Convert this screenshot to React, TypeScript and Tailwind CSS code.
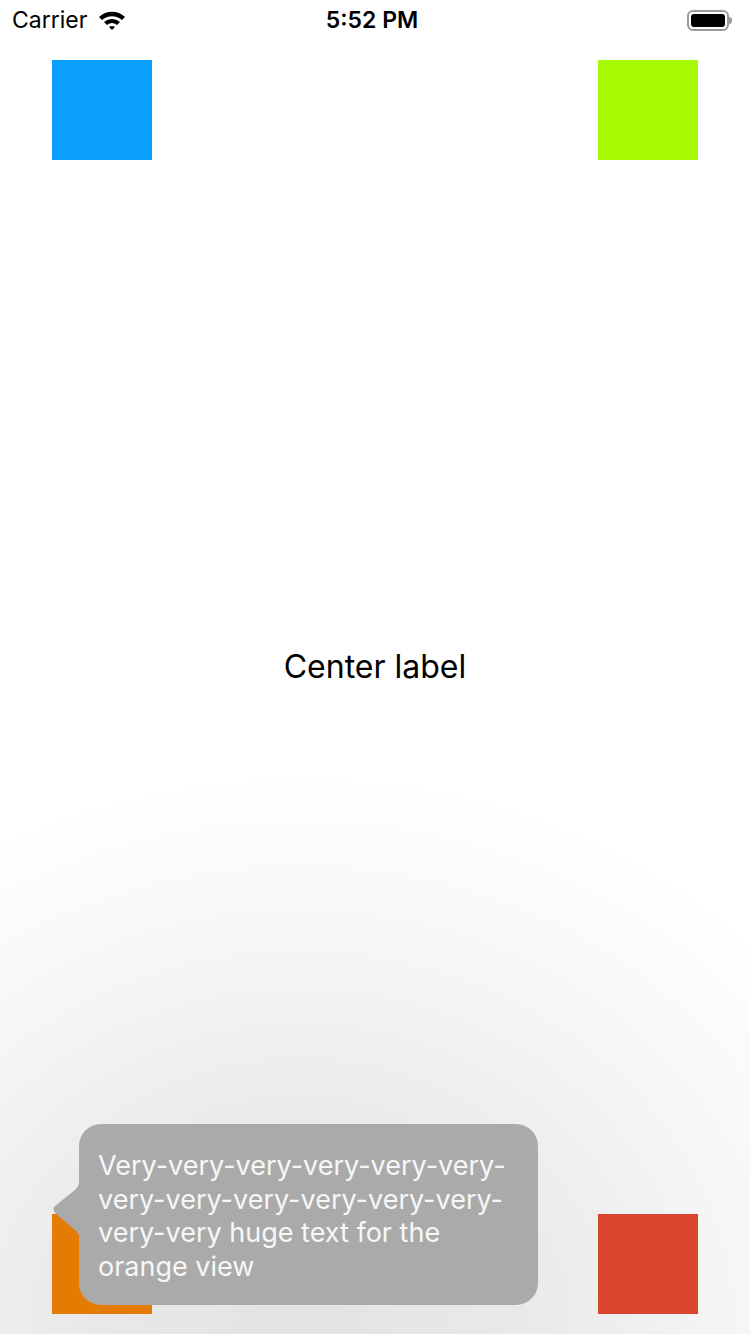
const StatusBar = () => (
  <div className="h-10 flex items-center px-3 text-[23px] text-black">
    <div className="flex items-center gap-[10px] flex-1">
      <span>Carrier</span>
      <svg width="30" height="22" viewBox="0 0 30 22">
        <path d="M2 8 A19 19 0 0 1 28 8 L25 11 A15 15 0 0 0 5 11 Z" fill="#000" />
        <path d="M7 13 A12 12 0 0 1 23 13 L20 16 A8 8 0 0 0 10 16 Z" fill="#000" />
        <path d="M12 18 A5 5 0 0 1 18 18 L15 21 Z" fill="#000" />
      </svg>
    </div>
    <span className="font-semibold">5:52 PM</span>
    <div className="flex-1 flex justify-end items-center pr-[6px]">
      <div className="w-[42px] h-[21px] rounded-[6px] border-2 border-[#9a9a9a] p-[2px]">
        <div className="w-full h-full bg-black rounded-[3px]" />
      </div>
      <div className="w-[3px] h-[7px] bg-[#9a9a9a] rounded-r-sm" />
    </div>
  </div>
);

const Tooltip = () => (
  <div className="absolute left-[52px] top-[1124px] flex">
    <svg width="28" height="181" viewBox="0 0 28 181" className="-mr-px">
      <path
        d="M28 50 C28 58 27 62 23 66 L3 82 Q0 85 3 89 L23 106 C27 110 28 113 28 120 Z"
        fill="#aaaaaa"
      />
    </svg>
    <div className="w-[459px] h-[181px] rounded-[22px] bg-[#aaaaaa] pl-[19px] pt-[25px] text-[27px] leading-[33.5px] text-[#f7f7f7]">
      <span className="block whitespace-nowrap">Very-very-very-very-very-very-</span>
      <span className="block whitespace-nowrap">very-very-very-very-very-very-</span>
      <span className="block whitespace-nowrap">very-very huge text for the</span>
      <span className="block whitespace-nowrap">orange view</span>
    </div>
  </div>
);

export default function App() {
  return (
    <div className="relative w-[750px] h-[1334px] overflow-hidden flex flex-col bg-[radial-gradient(ellipse_85%_42%_at_40%_100%,#e3e3e3_0%,#e9e9e9_35%,#f6f6f6_70%,#ffffff_100%)] font-['Inter','Noto_Sans',sans-serif]">
      <StatusBar />
      <div className="flex justify-between px-[52px] pt-5">
        <div className="w-[100px] h-[100px] bg-[#0a9ffd]" />
        <div className="w-[100px] h-[100px] bg-[#a6fb02]" />
      </div>
      <div className="flex-1 flex items-center justify-center pb-[40px]">
        <span className="text-[32px] text-black">Center label</span>
      </div>
      <div className="flex justify-between px-[52px] pb-5">
        <div className="w-[100px] h-[100px] bg-[#e47b02]" />
        <div className="w-[100px] h-[100px] bg-[#da4530]" />
      </div>
      <Tooltip />
    </div>
  );
}
